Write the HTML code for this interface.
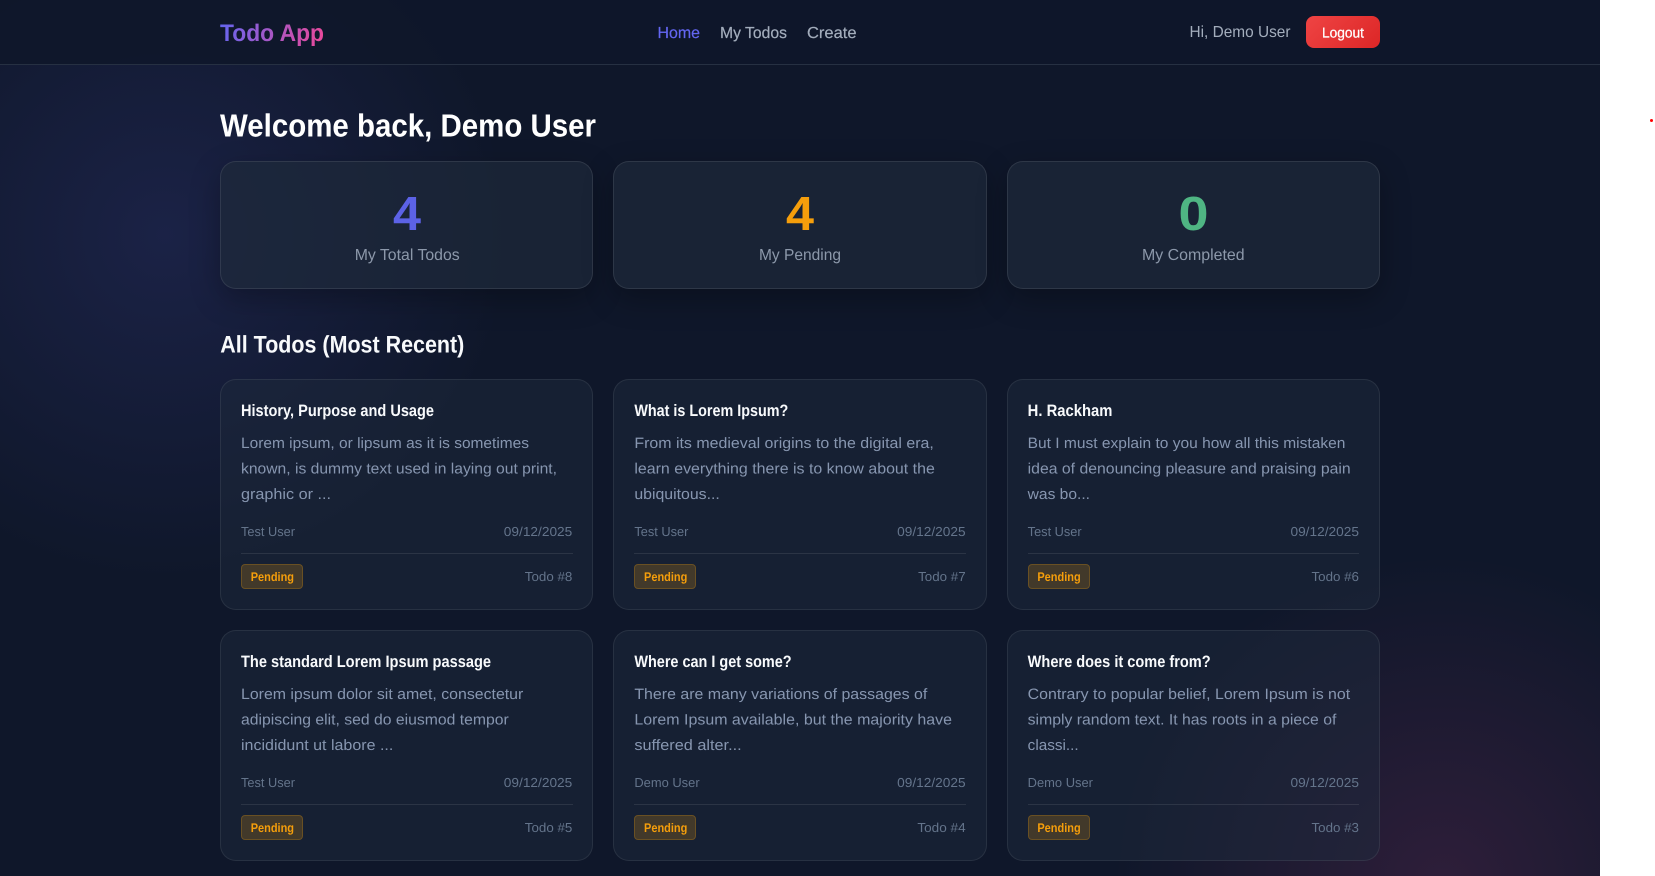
<!DOCTYPE html>
<html lang="en">
<head>
<meta charset="utf-8">
<title>Todo App</title>
<style>
html,body{margin:0;padding:0;width:1655px;height:876px;overflow:hidden;background:#fff}
#page{position:absolute;left:0;top:0;width:1600px;height:876px;overflow:hidden;background-color:#0f172a;
background-image:radial-gradient(circle 345px at 165px 235px,rgba(99,102,241,.14),rgba(99,102,241,0) 100%),radial-gradient(circle 330px at 1443px 885px,rgba(236,72,153,.14),rgba(236,72,153,0) 100%)}
.nav{position:absolute;left:0;top:0;width:1600px;height:64px;background:rgba(15,23,42,.88);border-bottom:1px solid #263042}
.logout{position:absolute;left:1306px;top:16px;width:74px;height:32px;border-radius:8px;background:linear-gradient(135deg,#ef4444,#dc2626)}
.stat{position:absolute;top:161px;width:371.33px;height:126px;border:1px solid rgba(255,255,255,.09);border-radius:16px;background:rgba(30,41,59,.7);box-shadow:0 10px 30px rgba(0,0,0,.28)}
.card{position:absolute;width:371.33px;height:229px;border:1px solid rgba(255,255,255,.08);border-radius:16px;background:rgba(30,41,59,.5)}
.rule{position:absolute;left:20px;right:19.5px;top:173px;height:1px;background:rgba(255,255,255,.09)}
.badge{position:absolute;left:20px;top:184px;width:60px;height:23px;border:1px solid rgba(245,158,11,.22);border-radius:4px;background:rgba(245,158,11,.2)}
.dot{position:absolute;left:1650px;top:119px;width:3px;height:3px;border-radius:50%;background:#f00}
svg{position:absolute;left:0;top:0}
text{font-family:"Liberation Sans",sans-serif;text-rendering:geometricPrecision}
.t{font-size:16.5px;font-weight:700;fill:#f8fafc}
.d{font-size:15px;fill:#8796b0}
.m{font-size:13px;fill:#64748b}
.p{font-size:12.5px;font-weight:700;fill:#f59e0b}
.n{font-size:16px;fill:#a3adbc;stroke:#a3adbc;stroke-width:.2px}
.l{font-size:16px;fill:#8c98aa}
.s{font-size:48px;font-weight:700}
</style>
</head>
<body>
<div id="page">
  <div class="nav"></div>
  <div class="logout"></div>
  <div class="stat" style="left:220px"></div>
  <div class="stat" style="left:613.33px"></div>
  <div class="stat" style="left:1006.67px"></div>
  <div class="card" style="left:220px;top:379px"><div class="rule"></div><div class="badge"></div></div>
  <div class="card" style="left:613.33px;top:379px"><div class="rule"></div><div class="badge"></div></div>
  <div class="card" style="left:1006.67px;top:379px"><div class="rule"></div><div class="badge"></div></div>
  <div class="card" style="left:220px;top:630px"><div class="rule"></div><div class="badge"></div></div>
  <div class="card" style="left:613.33px;top:630px"><div class="rule"></div><div class="badge"></div></div>
  <div class="card" style="left:1006.67px;top:630px"><div class="rule"></div><div class="badge"></div></div>
</div>
<div class="dot"></div>
<svg width="1655" height="876" viewBox="0 0 1655 876" xmlns="http://www.w3.org/2000/svg">
  <defs>
    <linearGradient id="lg" gradientUnits="userSpaceOnUse" x1="220" y1="20" x2="324" y2="45">
      <stop offset="0" stop-color="#6366f1"/><stop offset="1" stop-color="#ec4899"/>
    </linearGradient>
  </defs>
  <text x="220" y="41" font-size="24" font-weight="700" fill="url(#lg)" textLength="104" lengthAdjust="spacingAndGlyphs">Todo App</text>
  <text class="n" x="657.5" y="38" style="fill:#6366f1;stroke:#6366f1" textLength="42.5" lengthAdjust="spacingAndGlyphs">Home</text>
  <text class="n" x="720" y="38" textLength="67" lengthAdjust="spacingAndGlyphs">My Todos</text>
  <text class="n" x="807" y="38" textLength="49.5" lengthAdjust="spacingAndGlyphs">Create</text>
  <text class="n" x="1189.5" y="37" style="stroke-width:0" textLength="101" lengthAdjust="spacingAndGlyphs">Hi, Demo User</text>
  <text x="1322" y="37.5" font-size="14.4" fill="#fff" stroke="#fff" stroke-width=".25" textLength="42" lengthAdjust="spacingAndGlyphs">Logout</text>

  <text x="220" y="136.5" font-size="32" font-weight="700" fill="#fff" textLength="376" lengthAdjust="spacingAndGlyphs">Welcome back, Demo User</text>

  <text class="s" x="393" y="230" fill="#5c62e6" textLength="28" lengthAdjust="spacingAndGlyphs">4</text>
  <text class="s" x="786" y="230" fill="#f59e0b" textLength="28" lengthAdjust="spacingAndGlyphs">4</text>
  <text class="s" x="1178.5" y="230" fill="#4fb583" textLength="30" lengthAdjust="spacingAndGlyphs">0</text>
  <text class="l" x="354.7" y="260" textLength="105" lengthAdjust="spacingAndGlyphs">My Total Todos</text>
  <text class="l" x="759" y="260" textLength="82" lengthAdjust="spacingAndGlyphs">My Pending</text>
  <text class="l" x="1142" y="260" textLength="102.6" lengthAdjust="spacingAndGlyphs">My Completed</text>

  <text x="220.3" y="352.5" font-size="24" font-weight="700" fill="#f8fafc" textLength="244" lengthAdjust="spacingAndGlyphs">All Todos (Most Recent)</text>

  <g transform="translate(241,379)">
    <text class="t" y="37" textLength="193" lengthAdjust="spacingAndGlyphs">History, Purpose and Usage</text>
    <text class="d" y="68.8" textLength="288" lengthAdjust="spacingAndGlyphs">Lorem ipsum, or lipsum as it is sometimes</text>
    <text class="d" y="94.3" textLength="316" lengthAdjust="spacingAndGlyphs">known, is dummy text used in laying out print,</text>
    <text class="d" y="119.8" textLength="90" lengthAdjust="spacingAndGlyphs">graphic or ...</text>
    <text class="m" y="157" textLength="54" lengthAdjust="spacingAndGlyphs">Test User</text>
    <text class="m" x="262.8" y="157" textLength="68.5" lengthAdjust="spacingAndGlyphs">09/12/2025</text>
    <text class="p" x="9.7" y="202" textLength="43.3" lengthAdjust="spacingAndGlyphs">Pending</text>
    <text class="m" x="283.8" y="202" textLength="47.5" lengthAdjust="spacingAndGlyphs">Todo #8</text>
  </g>
  <g transform="translate(634.33,379)">
    <text class="t" y="37" textLength="154" lengthAdjust="spacingAndGlyphs">What is Lorem Ipsum?</text>
    <text class="d" y="68.8" textLength="299.5" lengthAdjust="spacingAndGlyphs">From its medieval origins to the digital era,</text>
    <text class="d" y="94.3" textLength="300.5" lengthAdjust="spacingAndGlyphs">learn everything there is to know about the</text>
    <text class="d" y="119.8" textLength="85.5" lengthAdjust="spacingAndGlyphs">ubiquitous...</text>
    <text class="m" y="157" textLength="54" lengthAdjust="spacingAndGlyphs">Test User</text>
    <text class="m" x="262.8" y="157" textLength="68.5" lengthAdjust="spacingAndGlyphs">09/12/2025</text>
    <text class="p" x="9.7" y="202" textLength="43.3" lengthAdjust="spacingAndGlyphs">Pending</text>
    <text class="m" x="283.8" y="202" textLength="47.5" lengthAdjust="spacingAndGlyphs">Todo #7</text>
  </g>
  <g transform="translate(1027.67,379)">
    <text class="t" y="37" textLength="84.7" lengthAdjust="spacingAndGlyphs">H. Rackham</text>
    <text class="d" y="68.8" textLength="317.7" lengthAdjust="spacingAndGlyphs">But I must explain to you how all this mistaken</text>
    <text class="d" y="94.3" textLength="323" lengthAdjust="spacingAndGlyphs">idea of denouncing pleasure and praising pain</text>
    <text class="d" y="119.8" textLength="62.3" lengthAdjust="spacingAndGlyphs">was bo...</text>
    <text class="m" y="157" textLength="54" lengthAdjust="spacingAndGlyphs">Test User</text>
    <text class="m" x="262.8" y="157" textLength="68.5" lengthAdjust="spacingAndGlyphs">09/12/2025</text>
    <text class="p" x="9.7" y="202" textLength="43.3" lengthAdjust="spacingAndGlyphs">Pending</text>
    <text class="m" x="283.8" y="202" textLength="47.5" lengthAdjust="spacingAndGlyphs">Todo #6</text>
  </g>
  <g transform="translate(241,630)">
    <text class="t" y="37" textLength="250" lengthAdjust="spacingAndGlyphs">The standard Lorem Ipsum passage</text>
    <text class="d" y="68.8" textLength="282.3" lengthAdjust="spacingAndGlyphs">Lorem ipsum dolor sit amet, consectetur</text>
    <text class="d" y="94.3" textLength="267.7" lengthAdjust="spacingAndGlyphs">adipiscing elit, sed do eiusmod tempor</text>
    <text class="d" y="119.8" textLength="152.3" lengthAdjust="spacingAndGlyphs">incididunt ut labore ...</text>
    <text class="m" y="157" textLength="54" lengthAdjust="spacingAndGlyphs">Test User</text>
    <text class="m" x="262.8" y="157" textLength="68.5" lengthAdjust="spacingAndGlyphs">09/12/2025</text>
    <text class="p" x="9.7" y="202" textLength="43.3" lengthAdjust="spacingAndGlyphs">Pending</text>
    <text class="m" x="283.8" y="202" textLength="47.5" lengthAdjust="spacingAndGlyphs">Todo #5</text>
  </g>
  <g transform="translate(634.33,630)">
    <text class="t" y="37" textLength="157.3" lengthAdjust="spacingAndGlyphs">Where can I get some?</text>
    <text class="d" y="68.8" textLength="293" lengthAdjust="spacingAndGlyphs">There are many variations of passages of</text>
    <text class="d" y="94.3" textLength="317.7" lengthAdjust="spacingAndGlyphs">Lorem Ipsum available, but the majority have</text>
    <text class="d" y="119.8" textLength="107.3" lengthAdjust="spacingAndGlyphs">suffered alter...</text>
    <text class="m" y="157" textLength="65.3" lengthAdjust="spacingAndGlyphs">Demo User</text>
    <text class="m" x="262.8" y="157" textLength="68.5" lengthAdjust="spacingAndGlyphs">09/12/2025</text>
    <text class="p" x="9.7" y="202" textLength="43.3" lengthAdjust="spacingAndGlyphs">Pending</text>
    <text class="m" x="283" y="202" textLength="48.3" lengthAdjust="spacingAndGlyphs">Todo #4</text>
  </g>
  <g transform="translate(1027.67,630)">
    <text class="t" y="37" textLength="183" lengthAdjust="spacingAndGlyphs">Where does it come from?</text>
    <text class="d" y="68.8" textLength="322.5" lengthAdjust="spacingAndGlyphs">Contrary to popular belief, Lorem Ipsum is not</text>
    <text class="d" y="94.3" textLength="308.7" lengthAdjust="spacingAndGlyphs">simply random text. It has roots in a piece of</text>
    <text class="d" y="119.8" textLength="51" lengthAdjust="spacingAndGlyphs">classi...</text>
    <text class="m" y="157" textLength="65.3" lengthAdjust="spacingAndGlyphs">Demo User</text>
    <text class="m" x="262.8" y="157" textLength="68.5" lengthAdjust="spacingAndGlyphs">09/12/2025</text>
    <text class="p" x="9.7" y="202" textLength="43.3" lengthAdjust="spacingAndGlyphs">Pending</text>
    <text class="m" x="283.8" y="202" textLength="47.5" lengthAdjust="spacingAndGlyphs">Todo #3</text>
  </g>
</svg>
</body>
</html>
